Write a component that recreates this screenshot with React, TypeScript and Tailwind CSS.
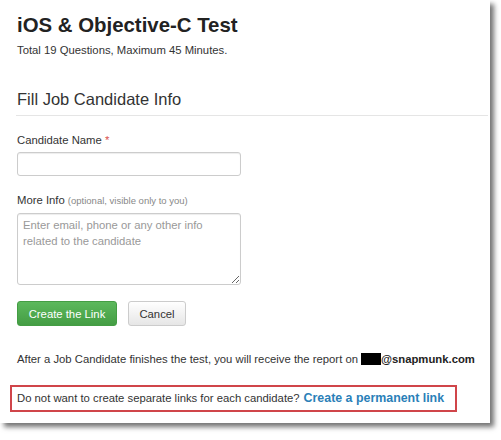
export default function App() {
  return (
    <div className="w-[501px] h-[440px] bg-white font-['Liberation_Sans',Arial,sans-serif] text-[#333]">
      <div className="w-[490px] h-[423px] bg-white shadow-[4px_4px_5px_rgba(0,0,0,0.55)] pl-[17px] pr-[2px] pt-[12px]">
        <h1 className="text-[20.4px] leading-[26px] font-bold text-[#222]">iOS &amp; Objective-C Test</h1>
        <p className="mt-[4px] text-[11.3px] leading-[16px] text-[#333]">Total 19 Questions, Maximum 45 Minutes.</p>

        <h2 className="mt-[30px] text-[16.5px] leading-[22px] text-[#333]">Fill Job Candidate Info</h2>
        <div className="mt-[5px] -ml-[1px] border-t border-[#e5e5e5]" />

        <div className="mt-[16px] text-[11.3px] leading-[16px] text-[#333]">
          Candidate Name <span className="text-[#d9534f]">*</span>
        </div>
        <input
          type="text"
          className="mt-[4px] block w-[224px] h-[24px] rounded-[3px] border border-[#ccc] bg-white shadow-[inset_0_1px_1px_rgba(0,0,0,0.075)] outline-none"
        />

        <div className="mt-[16px] text-[11.3px] leading-[16px] text-[#333]">
          More Info <span className="text-[9.5px] text-[#888]">(optional, visible only to you)</span>
        </div>
        <textarea
          placeholder={"Enter email, phone or any other info related to the candidate"}
          className="mt-[4px] block w-[224px] h-[72px] rounded-[3px] border border-[#ccc] bg-white px-[5px] py-[3px] text-[11.3px] leading-[16px] placeholder:text-[#999] outline-none shadow-[inset_0_1px_1px_rgba(0,0,0,0.075)]"
        />

        <div className="mt-[16px] flex gap-[11px]">
          <button className="w-[100px] h-[25px] rounded-[3px] border border-[#449d44] bg-gradient-to-b from-[#5cb85c] to-[#449d44] text-white text-[11.3px] leading-[16px]">
            Create the Link
          </button>
          <button className="w-[58px] h-[25px] rounded-[3px] border border-[#ccc] bg-gradient-to-b from-white to-[#e6e6e6] text-[#333] text-[11.3px] leading-[16px]">
            Cancel
          </button>
        </div>

        <p className="mt-[25px] flex items-center text-[11.3px] leading-[16px] text-[#333] whitespace-nowrap">
          After a Job Candidate finishes the test, you will receive the report on
          <span className="ml-[3px] inline-block w-[20px] h-[12px] bg-black" />
          <span className="font-bold text-[#222]">@snapmunk.com</span>
        </p>

        <div className="mt-[18px] -ml-[7px] w-[447px] h-[27px] border-2 border-[#d0454a] pl-[5px] flex items-center whitespace-nowrap">
          <span className="text-[11.3px] text-[#333]">Do not want to create separate links for each candidate?</span>
          <a className="ml-[4px] text-[12.4px] font-bold text-[#2a7fb8]">Create a permanent link</a>
        </div>
      </div>
    </div>
  )
}
